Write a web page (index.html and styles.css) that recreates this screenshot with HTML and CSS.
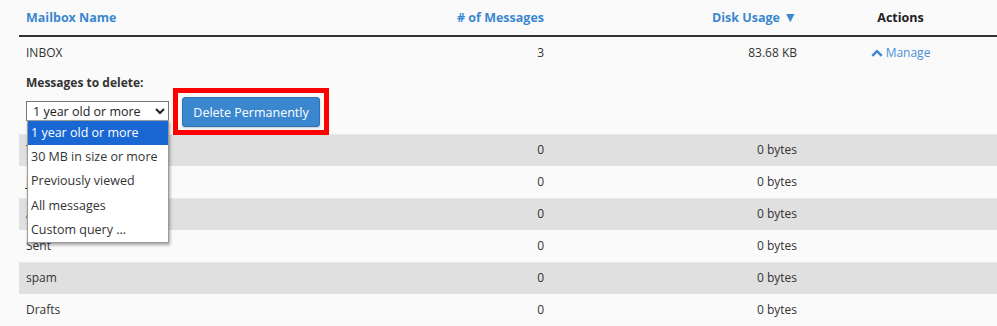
FILE: index.html
```html
<!DOCTYPE html>
<html>
<head>
<meta charset="utf-8">
<link rel="stylesheet" href="styles.css">
</head>
<body>
<div class="page">
  <table class="mail">
    <colgroup>
      <col class="c1"><col class="c2"><col class="c3"><col class="c4">
    </colgroup>
    <thead>
      <tr>
        <th class="left sort">Mailbox Name</th>
        <th class="right sort"># of Messages</th>
        <th class="right sort">Disk Usage <span class="arrow">▼</span></th>
        <th class="center">Actions</th>
      </tr>
    </thead>
    <tbody>
      <tr class="plain">
        <td>INBOX</td>
        <td class="right">3</td>
        <td class="right">83.68 KB</td>
        <td class="center"><a class="manage"><svg class="caret" viewBox="0 0 12 8" width="12" height="8"><path d="M1.3 6.8 L6 2.1 L10.7 6.8" fill="none" stroke="#3b87cf" stroke-width="2.4"/></svg>Manage</a></td>
      </tr>
      <tr class="plain expand">
        <td colspan="4">
          <div class="form">
            <div class="label">Messages to delete:</div>
            <div class="controls">
              <div class="selwrap">
                <select class="sel">
                  <option>1 year old or more</option>
                  <option>30 MB in size or more</option>
                  <option>Previously viewed</option>
                  <option>All messages</option>
                  <option>Custom query ...</option>
                </select>
                <ul class="popup">
                  <li class="on">1 year old or more</li>
                  <li>30 MB in size or more</li>
                  <li>Previously viewed</li>
                  <li>All messages</li>
                  <li>Custom query ...</li>
                </ul>
              </div>
              <span class="mark"><button class="btn">Delete Permanently</button></span>
            </div>
          </div>
        </td>
      </tr>
      <tr class="gray"><td>Trash</td><td class="right">0</td><td class="right">0 bytes</td><td></td></tr>
      <tr class="plain"><td>Junk</td><td class="right">0</td><td class="right">0 bytes</td><td></td></tr>
      <tr class="gray"><td>Archive</td><td class="right">0</td><td class="right">0 bytes</td><td></td></tr>
      <tr class="plain"><td>Sent</td><td class="right">0</td><td class="right">0 bytes</td><td></td></tr>
      <tr class="gray"><td>spam</td><td class="right">0</td><td class="right">0 bytes</td><td></td></tr>
      <tr class="plain"><td>Drafts</td><td class="right">0</td><td class="right">0 bytes</td><td></td></tr>
    </tbody>
  </table>
</div>
</body>
</html>
```
FILE: styles.css
```css
html, body {
  margin: 0;
  padding: 0;
  background: #fafafa;
}
body {
  font-family: "Open Sans", "Liberation Sans", sans-serif;
  font-size: 12px;
  color: #333;
  overflow: hidden;
}
.page {
  padding-left: 19px;
}
.mail {
  width: 978px;
  border-collapse: collapse;
  table-layout: fixed;
}
.c1 { width: 281px; }
.c2 { width: 251px; }
.c3 { width: 253px; }
.c4 { width: 193px; }
th {
  height: 36px;
  padding: 0 7px;
  font-weight: 700;
  font-size: 12.5px;
  line-height: 16px;
  border-bottom: 2px solid #333;
  vertical-align: middle;
  box-sizing: border-box;
}
th.sort { color: #3b87cf; }
th.center { color: #222; }
.left { text-align: left; }
.right { text-align: right; }
.center { text-align: center; }
td {
  height: 32px;
  padding: 0 7px;
  line-height: 16px;
  box-sizing: border-box;
    vertical-align: middle;
}
tr.gray td { background: #e0e0e0; }
tr.gray { border-top: 1px solid #e8e8e8; }
.arrow { font-size: 14px; line-height: 14px; }
.manage {
  color: #4a90d9;
  display: inline-flex;
  align-items: center;
  gap: 3px;
}
.caret { display: block; }
tr.expand td {
  height: 66px;
  vertical-align: top;
}
.form {
  padding-top: 6px;
}
.label {
  font-weight: 700;
  line-height: 17px;
}
.controls {
  display: flex;
  align-items: center;
  gap: 13px;
  margin-top: 4px;
}
.selwrap {
  position: relative;
}
.sel {
  width: 143px;
  height: 20px;
  font-family: "Open Sans", "Liberation Sans", sans-serif;
  font-size: 12.5px;
  color: #222;
  background: #fff;
  border: 1px solid #767676;
  border-radius: 0;
  padding: 0 0 0 2px;
  margin: 0;
  display: block;
}
.popup {
  position: absolute;
  left: 1px;
  top: 19px;
  width: 142px;
  margin: 0;
  padding: 0;
  list-style: none;
  background: #fff;
  border: 1px solid #9a9a9a;
  box-shadow: 1px 2px 3px rgba(0,0,0,0.35);
  z-index: 5;
  box-sizing: border-box;
}
.popup li {
  height: 24.2px;
  line-height: 24px;
  padding-left: 3px;
  font-size: 12.5px;
  color: #333;
  white-space: nowrap;
}
.popup li.on {
  background: #1967d2;
  color: #fff;
}
.mark {
  position: relative;
  display: block;
  margin-top: 2px;
}
.mark::after {
  content: "";
  position: absolute;
  left: -9px;
  top: -9px;
  right: -9px;
  bottom: -8px;
  border: 5px solid #ff0000;
  pointer-events: none;
}
.btn {
  display: block;
  width: 138px;
  height: 30px;
  background: #3a87cf;
  color: #fff;
  border: 1px solid #2f74b5;
  border-radius: 3px;
  font-family: "Open Sans", "Liberation Sans", sans-serif;
  font-size: 12.5px;
  padding: 0;
  box-shadow: 0 1px 2px rgba(0,0,0,0.2);
}
```
